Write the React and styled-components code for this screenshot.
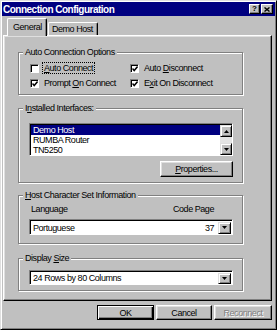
import styled, { createGlobalStyle } from "styled-components";

const GlobalStyle = createGlobalStyle`
  html, body {
    margin: 0;
    padding: 0;
    background: #c0c0c0;
  }
  body {
    font-family: "Liberation Sans", Arial, sans-serif;
    font-size: 9px;
    letter-spacing: -0.45px;
    color: #000;
  }
  * { box-sizing: border-box; }
`

const Window = styled.div`
  width: 277px;
  height: 330px;
  background: #c0c0c0;
  border-top: 1px solid #dfdfdf;
  border-left: 1px solid #dfdfdf;
  border-right: 1px solid #000;
  border-bottom: 1px solid #000;
  box-shadow: inset 1px 1px 0 #fff, inset -1px -1px 0 #808080;
  padding: 1px 1px 2px 1px;
  display: flex;
  flex-direction: column;
`
const TitleBar = styled.div`
  height: 14px;
  background: #000080;
  display: flex;
  align-items: center;
  padding: 0 2px 0 1px;
`
const Title = styled.span`
  color: #fff;
  font-weight: bold;
  font-size: 10px;
  letter-spacing: -0.5px;
`
const CapButtons = styled.div`
  margin-left: auto;
  display: flex;
  gap: 1px;
`
const CapButton = styled.div`
  width: ${props => props.$w || 12}px;
  height: 10px;
  background: #c0c0c0;
  border-top: 1px solid #fff;
  border-left: 1px solid #fff;
  border-right: 1px solid #000;
  border-bottom: 1px solid #000;
  box-shadow: inset -1px -1px 0 #808080;
  display: flex;
  align-items: center;
  justify-content: center;
  font-weight: bold;
  font-size: 8px;
  letter-spacing: 0;
  line-height: 8px;
`
const Body = styled.div`
  display: flex;
  flex-direction: column;
  padding: 2px 2px 0 1px;
`
const Tabs = styled.div`
  display: flex;
  align-items: flex-end;
  height: 17px;
  padding-left: 4px;
  position: relative;
  z-index: 1;
`
const Tab = styled.div`
  height: ${props => props.$active ? 18 : 13}px;
  margin-bottom: ${props => props.$active ? -1 : 0}px;
  margin-left: ${props => props.$active ? 0 : 1}px;
  background: #c0c0c0;
  border-top: 1px solid #fff;
  border-left: 1px solid #fff;
  border-right: 1px solid #000;
  border-radius: 2px 2px 0 0;
  box-shadow: inset -1px 0 0 #808080;
  padding: ${props => props.$active ? "0 4px 2px 5px" : "0 4px 0 3px"};
  display: flex;
  align-items: center;
`
const Panel = styled.div`
  width: 269px;
  height: 266px;
  border-top: 1px solid #fff;
  border-left: 1px solid #fff;
  border-right: 1px solid #000;
  border-bottom: 1px solid #000;
  box-shadow: inset -1px -1px 0 #808080, inset 1px 1px 0 #dfdfdf;
  padding: 16px 0 0 14px;
  display: flex;
  flex-direction: column;
`
const Group = styled.div`
  position: relative;
  width: 225px;
  height: ${props => props.$h}px;
  margin-bottom: ${props => props.$gap || 0}px;
  border: 1px solid #808080;
  box-shadow: inset 1px 1px 0 #fff, 1px 1px 0 #fff;
  padding: ${props => props.$pad};
  display: flex;
  flex-direction: column;
`
const GroupLabel = styled.span`
  position: absolute;
  top: -6px;
  left: 4px;
  padding: 0 2px;
  background: #c0c0c0;
  line-height: 11px;
`
const U = styled.span`
  text-decoration: underline;
`
const CheckGrid = styled.div`
  display: grid;
  grid-template-columns: 100px auto;
  row-gap: 5px;
`
const CheckItem = styled.div`
  display: flex;
  align-items: center;
  gap: 4px;
  height: 10px;
`
const Box = styled.div`
  width: 9px;
  height: 9px;
  background: #fff;
  border-top: 1px solid #808080;
  border-left: 1px solid #808080;
  border-right: 1px solid #fff;
  border-bottom: 1px solid #fff;
  box-shadow: inset 1px 1px 0 #000;
  display: flex;
  align-items: center;
  justify-content: center;
  padding: 1px 0 0 1px;
`
const CheckText = styled.span`
  line-height: 10px;
  padding: 0 1px;
  outline: ${props => props.$focus ? "1px dotted #000" : "none"};
`
const ListBox = styled.div`
  display: flex;
  width: 204px;
  height: 33px;
  background: #fff;
  border-top: 1px solid #808080;
  border-left: 1px solid #808080;
  border-right: 1px solid #fff;
  border-bottom: 1px solid #fff;
  box-shadow: inset 1px 1px 0 #000;
`
const ListItems = styled.div`
  flex: 1;
  padding: 1px 0 0 1px;
`
const ListRow = styled.div`
  height: 10px;
  line-height: 10px;
  padding-left: 2px;
  background: ${props => props.$selected ? "#000080" : "transparent"};
  color: ${props => props.$selected ? "#fff" : "#000"};
`
const ScrollBar = styled.div`
  width: 12px;
  display: flex;
  flex-direction: column;
  padding-top: 1px;
`
const ScrollTrack = styled.div`
  flex: 1;
  background: #e4e4e4;
`
const ArrowButton = styled.div`
  width: ${props => props.$w || 12}px;
  height: ${props => props.$h || 12}px;
  background: #c0c0c0;
  border-top: 1px solid #dfdfdf;
  border-left: 1px solid #dfdfdf;
  border-right: 1px solid #000;
  border-bottom: 1px solid #000;
  box-shadow: inset 1px 1px 0 #fff, inset -1px -1px 0 #808080;
  display: flex;
  align-items: center;
  justify-content: center;
`
const Button = styled.div`
  width: ${props => props.$w}px;
  height: ${props => props.$h || 15}px;
  background: #c0c0c0;
  border-top: 1px solid ${props => props.$default ? "#000" : "#fff"};
  border-left: 1px solid ${props => props.$default ? "#000" : "#fff"};
  border-right: 1px solid #000;
  border-bottom: 1px solid #000;
  box-shadow: ${props => props.$default
    ? "inset 1px 1px 0 #fff, inset -1px -1px 0 #000, inset -2px -2px 0 #808080"
    : "inset -1px -1px 0 #808080, inset 1px 1px 0 #dfdfdf"};
  display: flex;
  align-items: center;
  justify-content: center;
  color: ${props => props.$disabled ? "#808080" : "#000"};
  text-shadow: ${props => props.$disabled ? "1px 1px 0 #fff" : "none"};
`
const PropsRow = styled.div`
  display: flex;
  justify-content: flex-end;
  width: 204px;
  margin-top: 5px;
`
const LabelRow = styled.div`
  display: flex;
  justify-content: space-between;
  width: 185px;
  line-height: 11px;
`
const Combo = styled.div`
  display: flex;
  align-items: center;
  width: 204px;
  height: ${props => props.$h}px;
  margin-top: ${props => props.$mt || 0}px;
  background: #fff;
  border-top: 1px solid #808080;
  border-left: 1px solid #808080;
  border-right: 1px solid #fff;
  border-bottom: 1px solid #fff;
  box-shadow: inset 1px 1px 0 #000;
  padding: 1px 1px 0 3px;
`
const ComboText = styled.span`
  flex: 1;
`
const ComboExtra = styled.span`
  margin-right: 4px;
`
const ButtonRow = styled.div`
  display: flex;
  justify-content: flex-end;
  gap: 2px;
  margin-top: 4px;
  width: 269px;
`

const Check = ({ on }) => (
  <Box>
    {on && (
      <svg width="6" height="6" viewBox="0 0 6 6">
        <path d="M0.5 2.5 L2.2 4.6 L5.6 0.6" stroke="#000" strokeWidth="1.5" fill="none" />
      </svg>
    )}
  </Box>
)

const Arrow = ({ up }) => (
  <svg width="5" height="3" viewBox="0 0 5 3">
    <path d={up ? "M2.5 0 L5 3 L0 3 Z" : "M0 0 L5 0 L2.5 3 Z"} fill="#000" />
  </svg>
)

const App = () => {
  return (
    <>
      <GlobalStyle />
      <Window>
        <TitleBar>
          <Title>Connection Configuration</Title>
          <CapButtons>
            <CapButton $w={11}>?</CapButton>
            <CapButton $w={12}>
              <svg width="6" height="5" viewBox="0 0 6 5">
                <path d="M0.5 0.5 L5.5 4.5 M5.5 0.5 L0.5 4.5" stroke="#000" strokeWidth="1.4" />
              </svg>
            </CapButton>
          </CapButtons>
        </TitleBar>
        <Body>
          <Tabs>
            <Tab $active>General</Tab>
            <Tab>Demo Host</Tab>
          </Tabs>
          <Panel>
            <Group $h={43} $gap={13} $pad="10px 0 0 11px">
              <GroupLabel>Auto Connection Options</GroupLabel>
              <CheckGrid>
                <CheckItem>
                  <Check />
                  <CheckText $focus><U>A</U>uto Connect</CheckText>
                </CheckItem>
                <CheckItem>
                  <Check on />
                  <CheckText>Auto <U>D</U>isconnect</CheckText>
                </CheckItem>
                <CheckItem>
                  <Check on />
                  <CheckText>Prompt <U>O</U>n Connect</CheckText>
                </CheckItem>
                <CheckItem>
                  <Check on />
                  <CheckText>E<U>x</U>it On Disconnect</CheckText>
                </CheckItem>
              </CheckGrid>
            </Group>

            <Group $h={75} $gap={12} $pad="14px 0 0 10px">
              <GroupLabel>I<U>n</U>stalled Interfaces:</GroupLabel>
              <ListBox>
                <ListItems>
                  <ListRow $selected>Demo Host</ListRow>
                  <ListRow>RUMBA Router</ListRow>
                  <ListRow>TN5250</ListRow>
                </ListItems>
                <ScrollBar>
                  <ArrowButton><Arrow up /></ArrowButton>
                  <ScrollTrack />
                  <ArrowButton><Arrow /></ArrowButton>
                </ScrollBar>
              </ListBox>
              <PropsRow>
                <Button $w={73} $h={16}><span><U>P</U>roperties...</span></Button>
              </PropsRow>
            </Group>

            <Group $h={49} $gap={14} $pad="8px 0 0 10px">
              <GroupLabel><U>H</U>ost Character Set Information</GroupLabel>
              <LabelRow>
                <span>&nbsp;Language</span>
                <span>Code Page</span>
              </LabelRow>
              <Combo $h={16} $mt={4}>
                <ComboText>Portuguese</ComboText>
                <ComboExtra>37</ComboExtra>
                <ArrowButton $w={13} $h={12}><Arrow /></ArrowButton>
              </Combo>
            </Group>

            <Group $h={33} $pad="11px 0 0 10px">
              <GroupLabel>Display <U>S</U>ize</GroupLabel>
              <Combo $h={15}>
                <ComboText>24 Rows by 80 Columns</ComboText>
                <ArrowButton $w={13} $h={11}><Arrow /></ArrowButton>
              </Combo>
            </Group>
          </Panel>
          <ButtonRow>
            <Button $w={57} $default>OK</Button>
            <Button $w={56}>Cancel</Button>
            <Button $w={58} $disabled>Reconnect</Button>
          </ButtonRow>
        </Body>
      </Window>
    </>
  );
};

export default App;
